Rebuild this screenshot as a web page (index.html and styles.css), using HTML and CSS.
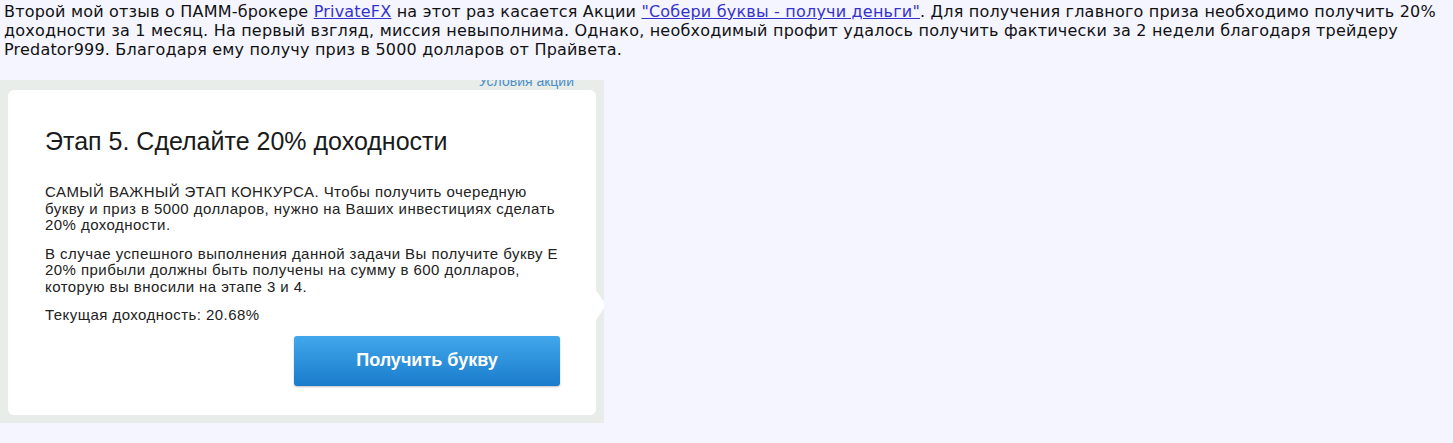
FILE: index.html
```html
<!DOCTYPE html>
<html lang="ru">
<head>
    <meta charset="UTF-8">
    <title>Отзыв о ПАММ-брокере PrivateFX</title>
    <link rel="stylesheet" href="styles.css">
</head>
<body>
    <div class="post">
        <p class="post-text">Второй мой отзыв о ПАММ-брокере <a href="#">PrivateFX</a> на этот раз касается Акции <a href="#">"Собери буквы - получи деньги"</a>. Для получения главного приза необходимо получить 20% доходности за 1 месяц. На первый взгляд, миссия невыполнима. Однако, необходимый профит удалось получить фактически за 2 недели благодаря трейдеру Predator999. Благодаря ему получу приз в 5000 долларов от Прайвета.</p>

        <div class="shot">
            <div class="shot-top">
                <span class="shot-link">Условия акции</span>
            </div>
            <div class="stage-card">
                <h1 class="stage-title">Этап 5. Сделайте 20% доходности</h1>
                <div class="stage-text">
                    <p>САМЫЙ ВАЖНЫЙ ЭТАП КОНКУРСА. Чтобы получить очередную букву и приз в 5000 долларов, нужно на Ваших инвестициях сделать 20% доходности.</p>
                    <p>В случае успешного выполнения данной задачи Вы получите букву Е 20% прибыли должны быть получены на сумму в 600 долларов, которую вы вносили на этапе 3 и 4.</p>
                    <p>Текущая доходность: 20.68%</p>
                </div>
                <div class="stage-actions">
                    <button class="letter-button">Получить букву</button>
                </div>
                <span class="card-notch"></span>
            </div>
        </div>
    </div>
</body>
</html>
```

FILE: styles.css
```css
* {
    margin: 0;
    padding: 0;
    box-sizing: border-box;
}

body {
    background: #f5f5ff;
    font-family: "DejaVu Sans", Verdana, sans-serif;
    color: #111;
}

.post {
    padding: 2px 2px 2px 4px;
}

.post-text {
    font-size: 16px;
    line-height: 19px;
    letter-spacing: 0.2px;
    margin-bottom: 21px;
}

.post-text a {
    color: #3333cc;
}

.shot {
    width: 604px;
    height: 343px;
    background: #e8edea;
    margin-left: -4px;
    padding: 0 8px 8px 8px;
    overflow: hidden;
}

.shot-top {
    height: 10px;
    text-align: right;
    padding-right: 22px;
    overflow: hidden;
}

.shot-link {
    display: block;
    font-family: Arial, "Liberation Sans", sans-serif;
    font-size: 14px;
    line-height: 10px;
    margin-top: -4px;
    color: #4d8fc7;
}

.stage-card {
    position: relative;
    background: #fff;
    border-radius: 6px;
    height: 325px;
    padding: 36px 37px 0 37px;
    font-family: Arial, "Liberation Sans", sans-serif;
    color: #222;
}

.stage-title {
    font-size: 25px;
    font-weight: normal;
    line-height: 30px;
    color: #1a1a1a;
    margin-bottom: 28px;
}

.stage-text {
    width: 518px;
    font-size: 15px;
    line-height: 16.5px;
    letter-spacing: 0.45px;
}

.stage-text p {
    margin-bottom: 12px;
}

.stage-actions {
    display: flex;
    justify-content: flex-end;
    width: 515px;
    margin-top: 7px;
}

.letter-button {
    width: 266px;
    height: 50px;
    border: none;
    border-radius: 3px;
    background: linear-gradient(#42a7ec, #1a7ccb);
    box-shadow: 0 1px 2px rgba(0, 0, 0, 0.25);
    color: #fff;
    font-family: Arial, "Liberation Sans", sans-serif;
    font-size: 18px;
    font-weight: bold;
}

.card-notch {
    position: absolute;
    right: -10px;
    top: 200px;
    width: 0;
    height: 0;
    border-top: 15px solid transparent;
    border-bottom: 15px solid transparent;
    border-left: 10px solid #fff;
}
```
